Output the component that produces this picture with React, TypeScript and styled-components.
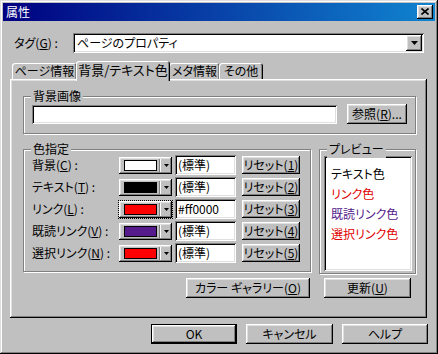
import React from 'react';
import styled, { createGlobalStyle, css } from 'styled-components';

const GRAY = '#c0c0c0';

const GlobalStyle = createGlobalStyle`
  html, body {
    margin: 0;
    padding: 0;
    background: ${GRAY};
  }
  body {
    font-family: "Noto Sans CJK JP", "Noto Sans", sans-serif;
    font-size: 12px;
    font-feature-settings: "palt";
    color: #000;
  }
  * {
    box-sizing: border-box;
  }
`;

const raised = css`
  box-shadow: inset -1px -1px #000, inset 1px 1px #fff, inset -2px -2px #808080,
    inset 2px 2px #dfdfdf;
`;

const sunken = css`
  box-shadow: inset 1px 1px #808080, inset -1px -1px #fff, inset 2px 2px #000,
    inset -2px -2px #dfdfdf;
`;

const Window = styled.div`
  width: 438px;
  height: 354px;
  background: ${GRAY};
  padding: 3px;
  box-shadow: inset -1px -1px #000, inset 1px 1px #dfdfdf, inset -2px -2px #808080,
    inset 2px 2px #fff;
  display: flex;
  flex-direction: column;
`;

const TitleBar = styled.div`
  height: 18px;
  background: linear-gradient(90deg, #000080, #1084d0);
  color: #fff;
  display: flex;
  align-items: center;
  justify-content: space-between;
  padding: 0 2px 0 3px;
  line-height: 18px;
`;

const CloseButton = styled.div`
  width: 16px;
  height: 14px;
  background: ${GRAY};
  ${raised};
  display: flex;
  align-items: center;
  justify-content: center;
  padding-bottom: 1px;
`;

const Body = styled.div`
  display: flex;
  flex-direction: column;
  padding: 12px 8px 0 7px;
`;

const TagRow = styled.div`
  display: flex;
  align-items: center;
  height: 20px;
  padding-left: 4px;
`;

const Label = styled.span<{ $w: number }>`
  width: ${p => p.$w}px;
  flex: 0 0 auto;
  white-space: nowrap;
  line-height: 20px;
`;

const Combo = styled.div`
  width: 351px;
  height: 20px;
  background: #fff;
  ${sunken};
  display: flex;
  align-items: center;
  justify-content: space-between;
  padding: 2px;
  line-height: 16px;
`;

const ComboText = styled.span`
  padding-left: 2px;
`;

const DropButton = styled.div`
  width: 16px;
  height: 16px;
  background: ${GRAY};
  ${raised};
  display: flex;
  align-items: center;
  justify-content: center;
`;

const TabStrip = styled.div`
  display: flex;
  align-items: flex-end;
  height: 18px;
  margin-top: 8px;
  padding-left: 2px;
`;

const Tab = styled.div<{ $w: number; $active?: boolean }>`
  position: relative;
  width: ${p => p.$w}px;
  height: ${p => (p.$active ? 20 : 16)}px;
  margin-bottom: ${p => (p.$active ? -2 : 0)}px;
  margin-left: -1px;
  z-index: ${p => (p.$active ? 2 : 1)};
  background: ${GRAY};
  border-radius: 3px 3px 0 0;
  box-shadow: inset 1px 1px #fff, inset -1px 0 #000, inset -2px 0 #808080;
  text-align: center;
  white-space: nowrap;
  line-height: ${p => (p.$active ? 18 : 16)}px;
  font-size: ${p => (p.$active ? 13 : 12)}px;
  &:first-child {
    margin-left: 0;
  }
`;

const Panel = styled.div`
  height: 239px;
  background: ${GRAY};
  box-shadow: inset -1px -1px #000, inset 1px 1px #fff, inset -2px -2px #808080,
    inset 2px 2px #dfdfdf;
  padding: 17px 11px 0 13px;
  display: flex;
  flex-direction: column;
`;

const Group = styled.div<{ $w?: number; $h: number }>`
  position: relative;
  ${p => (p.$w ? `width: ${p.$w}px; flex: 0 0 auto;` : '')}
  height: ${p => p.$h}px;
  border: 1px solid #808080;
  box-shadow: inset 1px 1px #fff, 1px 1px #fff;
`;

const GroupTitle = styled.span`
  position: absolute;
  top: -10px;
  left: 7px;
  padding: 0 2px;
  background: ${GRAY};
  line-height: 18px;
  white-space: nowrap;
`;

const ImageRow = styled.div`
  display: flex;
  align-items: center;
  gap: 10px;
  padding: 7px 0 0 8px;
`;

const TextField = styled.div<{ $w: number; $h?: number }>`
  width: ${p => p.$w}px;
  height: ${p => p.$h ?? 20}px;
  flex: 0 0 auto;
  background: #fff;
  ${sunken};
  padding: 0 3px;
  line-height: ${p => p.$h ?? 20}px;
  white-space: nowrap;
  overflow: hidden;
`;

const Button = styled.div<{ $w: number; $h?: number; $default?: boolean }>`
  width: ${p => p.$w}px;
  height: ${p => p.$h ?? 20}px;
  flex: 0 0 auto;
  background: ${GRAY};
  ${raised};
  ${p =>
    p.$default &&
    css`
      box-shadow: inset 0 0 0 1px #000, inset -2px -2px #000, inset 2px 2px #fff,
        inset -3px -3px #808080, inset 3px 3px #dfdfdf;
    `}
  display: flex;
  align-items: center;
  justify-content: center;
  white-space: nowrap;
  line-height: 16px;
`;

const GroupsRow = styled.div`
  display: flex;
  gap: 8px;
  margin-top: 15px;
`;

const ColorGrid = styled.div`
  display: grid;
  grid-template-columns: 84px 53px 61px 58px;
  grid-auto-rows: 20px;
  column-gap: 3px;
  row-gap: 2px;
  align-items: center;
  padding: 5px 0 0 8px;
  & > :nth-child(4n) {
    margin-left: 3px;
  }
`;

const Picker = styled.div<{ $focus?: boolean }>`
  width: 53px;
  height: 17px;
  background: ${GRAY};
  ${raised};
  display: flex;
  align-items: center;
  padding: 0 3px 0 5px;
  ${p =>
    p.$focus &&
    css`
      outline: 1px dotted #000;
      outline-offset: 0;
    `}
`;

const Swatch = styled.div<{ $color: string }>`
  width: 33px;
  height: 11px;
  border: 1px solid #000;
  background: ${p => p.$color};
`;

const Divider = styled.div`
  width: 2px;
  height: 13px;
  margin: 0 3px 0 2px;
  border-left: 1px solid #808080;
  border-right: 1px solid #fff;
`;

const PreviewGroup = styled(Group)`
  padding: 6px 3px 2px 4px;
`;

const PreviewBox = styled.div`
  height: 100%;
  background: #fff;
  ${sunken};
  padding: 8px 0 0 7px;
`;

const PreviewLine = styled.div<{ $color: string }>`
  color: ${p => p.$color};
  line-height: 20px;
  white-space: nowrap;
`;

const PanelButtons = styled.div`
  display: flex;
  justify-content: flex-end;
  gap: 14px;
  margin-top: 4px;
  padding-right: 5px;
`;

const Footer = styled.div`
  display: flex;
  justify-content: flex-end;
  gap: 9px;
  margin-top: 6px;
  margin-right: -1px;
`;

const Arrow = () => (
  <svg width="7" height="4" viewBox="0 0 7 4">
    <polygon points="0,0 7,0 3.5,4" fill="#000" />
  </svg>
);

const SmallArrow = () => (
  <svg width="5" height="3" viewBox="0 0 5 3">
    <polygon points="0,0 5,0 2.5,3" fill="#000" />
  </svg>
);

const colorRows = [
  { label: '背景', key: 'C', color: '#ffffff', value: '(標準)' },
  { label: 'テキスト', key: 'T', color: '#000000', value: '(標準)' },
  { label: 'リンク', key: 'L', color: '#ff0000', value: '#ff0000', focus: true },
  { label: '既読リンク', key: 'V', color: '#551a8b', value: '(標準)' },
  { label: '選択リンク', key: 'N', color: '#ff0000', value: '(標準)' },
];

export default function App() {
  return (
    <>
      <GlobalStyle />
      <Window>
        <TitleBar>
          <span>属性</span>
          <CloseButton>
            <svg width="8" height="7" viewBox="0 0 8 7">
              <path d="M0.5 0.5 L7.5 6.5 M7.5 0.5 L0.5 6.5" stroke="#000" strokeWidth="1.6" />
            </svg>
          </CloseButton>
        </TitleBar>
        <Body>
          <TagRow>
            <Label $w={59}>
              タグ(<u>G</u>) :
            </Label>
            <Combo>
              <ComboText>ページのプロパティ</ComboText>
              <DropButton>
                <Arrow />
              </DropButton>
            </Combo>
          </TagRow>
          <TabStrip>
            <Tab $w={65}>ページ情報</Tab>
            <Tab $w={94} $active>
              背景/テキスト色
            </Tab>
            <Tab $w={51}>メタ情報</Tab>
            <Tab $w={44}>その他</Tab>
          </TabStrip>
          <Panel>
            <Group $h={38}>
              <GroupTitle>背景画像</GroupTitle>
              <ImageRow>
                <TextField $w={305} $h={19} />
                <Button $w={60}>
                  参照(<u>R</u>)...
                </Button>
              </ImageRow>
            </Group>
            <GroupsRow>
              <Group $w={288} $h={123}>
                <GroupTitle>色指定</GroupTitle>
                <ColorGrid>
                  {colorRows.map((r, i) => (
                    <React.Fragment key={r.key}>
                      <Label $w={84}>
                        {r.label}(<u>{r.key}</u>) :
                      </Label>
                      <Picker $focus={r.focus}>
                        <Swatch $color={r.color} />
                        <Divider />
                        <SmallArrow />
                      </Picker>
                      <TextField $w={61}>{r.value}</TextField>
                      <Button $w={58} $h={18}>
                        リセット(<u>{i + 1}</u>)
                      </Button>
                    </React.Fragment>
                  ))}
                </ColorGrid>
              </Group>
              <PreviewGroup $w={97} $h={125}>
                <GroupTitle>プレビュー</GroupTitle>
                <PreviewBox>
                  <PreviewLine $color="#000">テキスト色</PreviewLine>
                  <PreviewLine $color="#e00000">リンク色</PreviewLine>
                  <PreviewLine $color="#551a8b">既読リンク色</PreviewLine>
                  <PreviewLine $color="#e00000">選択リンク色</PreviewLine>
                </PreviewBox>
              </PreviewGroup>
            </GroupsRow>
            <PanelButtons>
              <Button $w={124}>
                カラー ギャラリー(<u>O</u>)
              </Button>
              <Button $w={87}>
                更新(<u>U</u>)
              </Button>
            </PanelButtons>
          </Panel>
          <Footer>
            <Button $w={86} $default>
              OK
            </Button>
            <Button $w={87}>キャンセル</Button>
            <Button $w={86}>ヘルプ</Button>
          </Footer>
        </Body>
      </Window>
    </>
  );
}
